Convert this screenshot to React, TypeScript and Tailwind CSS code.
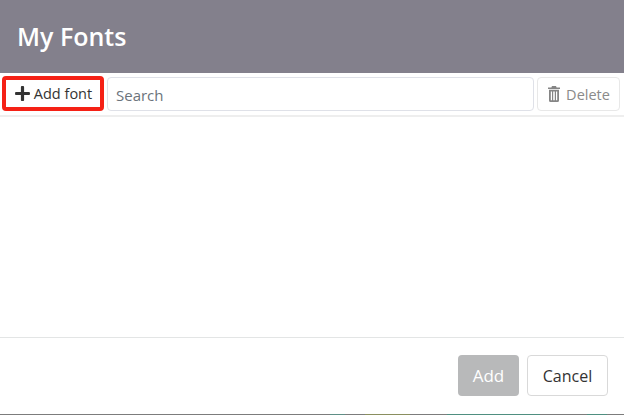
import { FaPlus } from "react-icons/fa";

function TrashIcon() {
  return (
    <svg width="12" height="16" viewBox="0 0 12 16" className="shrink-0 text-[#858585]" fill="currentColor">
      <path d="M4 0h4l.6 1.400H12v1.500H0V1.400h3.400z" />
      <path
        fillRule="evenodd"
        d="M1 3.800h10v10.700a1.500 1.500 0 0 1-1.500 1.500h-7A1.500 1.500 0 0 1 1 14.500zM2.800 5.500v8.800H4V5.500zm2.400 0v8.800h1.600V5.500zm2.800 0v8.800h1.200V5.500z"
      />
    </svg>
  );
}

export default function App() {
  return (
    <div className="flex h-[415px] w-[624px] flex-col overflow-hidden bg-white font-['Open_Sans',sans-serif]">
      <div className="flex h-[73px] shrink-0 items-center bg-[#83808c] pl-[17px]">
        <h1 className="text-[25px] font-semibold leading-none text-white">My Fonts</h1>
      </div>

      <div className="flex h-[44px] shrink-0 items-start gap-[3px] border-b-2 border-[#eeeeee] pl-[2px] pr-[4px] pt-[3px]">
        <button className="flex h-[35px] w-[102px] items-center justify-center gap-[3px] rounded-[4px] border-4 border-[#f52116] text-[14.5px] text-[#333333]">
          <FaPlus size={17} className="shrink-0 text-[#333333]" />
          <span>Add font</span>
        </button>
        <div className="mt-px flex h-[34px] flex-1 items-center rounded-[4px] border border-[#dfe1e8] px-[8px] pt-[2px] text-[15px] text-[#6b737b]">
          Search
        </div>
        <button className="mt-px flex h-[34px] w-[83px] items-center justify-center gap-[6px] rounded-[4px] border border-[#e8e8e8] pl-px text-[14.5px] text-[#8a8a8a]">
          <TrashIcon />
          <span className="pt-px">Delete</span>
        </button>
      </div>

      <div className="flex-1" />

      <div className="flex h-[77px] shrink-0 items-start justify-end gap-[8px] border-t border-[#e3e5e5] pr-[16px] pt-[17px]">
        <button className="flex h-[41px] w-[61px] items-center justify-center rounded-[4px] bg-[#b8b9ba] text-[17px] text-white">
          Add
        </button>
        <button className="flex h-[41px] w-[81px] items-center justify-center rounded-[4px] border border-[#d9d9d9] text-[16px] text-[#333333]">
          Cancel
        </button>
      </div>

      <div className="h-px shrink-0 bg-[linear-gradient(to_right,#7c7c7c_0,#7c7c7c_330px,#5f8f86_330px,#5f8f86_345px,#7c7c7c_345px,#7c7c7c_365px,#8a8f5f_365px,#8a8f5f_410px,#7c7c7c_410px,#7c7c7c_447px,#4f8f80_447px,#4f8f80_540px,#7c7c7c_540px,#7c7c7c_587px,#4f8f80_587px,#4f8f80_607px,#7c7c7c_607px)]" />
    </div>
  );
}
